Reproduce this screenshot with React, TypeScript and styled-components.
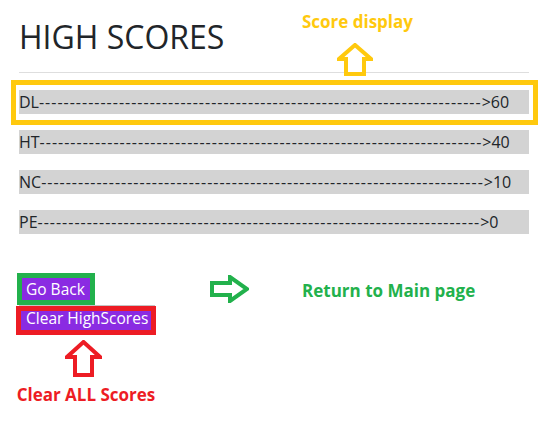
import React from 'react';
import styled, { createGlobalStyle } from 'styled-components';

const GlobalStyle = createGlobalStyle`
    body {
        margin: 0;
        background: #ffffff;
        font-family: 'Open Sans', 'Noto Sans', sans-serif;
        color: #212529;
    }
`;

const Page = styled.div`
    width: 550px;
    height: 434px;
    padding: 18px 21px 0 19px;
    box-sizing: border-box;
    overflow: hidden;
`;

const Header = styled.header`
    display: flex;
    align-items: flex-start;
    height: 54px;
`;

const Title = styled.h1`
    flex: 1;
    margin: 0;
    font-size: 32px;
    font-weight: 500;
    line-height: 1.2;
`;

const Callout = styled.div<{ $gap: number }>`
    display: flex;
    flex-direction: column;
    align-items: center;
    gap: ${({ $gap }) => $gap}px;
`;

const HeaderCallout = styled(Callout)`
    margin: -6px 116px 0 0;
`;

const Divider = styled.hr`
    margin: 0 0 17px 0;
    border: 0;
    border-top: 1px solid #dedede;
`;

const ScoreList = styled.ul`
    list-style: none;
    margin: 0;
    padding: 0;
    display: flex;
    flex-direction: column;
    gap: 16px;
`;

const ScoreRow = styled.li<{ $marked?: boolean }>`
    position: relative;
    height: 24px;
    line-height: 24px;
    font-size: 16px;
    background: #d3d3d3;
    white-space: nowrap;

    ${({ $marked }) =>
        $marked &&
        `
        &::after {
            content: '';
            position: absolute;
            left: -8px;
            top: -10px;
            right: -9px;
            bottom: -11px;
            border: 5px solid #ffc90e;
        }
    `}
`;

const Dashes = styled.span`
    letter-spacing: 1px;
`;

const Actions = styled.div`
    margin-top: 41px;
    display: grid;
    grid-template-columns: 191px 92px auto;
    row-gap: 2px;
    align-items: center;
`;

const ClearColumn = styled.div`
    grid-column: 1;
    display: flex;
    flex-direction: column;
    align-items: flex-start;
`;

const Button = styled.button<{ $frame: string; $inset: string }>`
    position: relative;
    height: 27px;
    padding: 0 6px;
    border: 1px solid #c4c4c4;
    background: #8a2be2;
    color: #ffffff;
    font-family: 'Open Sans', 'Noto Sans', sans-serif;
    font-size: 15.5px;
    line-height: 25px;
    cursor: pointer;
    justify-self: start;

    &::after {
        content: '';
        position: absolute;
        inset: ${({ $inset }) => $inset};
        border: 5px solid ${({ $frame }) => $frame};
    }
`;

const Note = styled.div<{ $color: string }>`
    color: ${({ $color }) => $color};
    font-size: 17px;
    font-weight: 700;
    line-height: 20px;
    white-space: nowrap;
`;

const ReturnNote = styled(Note)`
    margin-top: 4px;
`;

const ClearCallout = styled(Callout)`
    margin: 8px 0 0 -3px;
    width: 140px;
`;

const ArrowSvg = styled.svg<{ $shift?: number }>`
    display: block;
    margin-left: ${({ $shift }) => $shift ?? 0}px;
`;

const scores = [
    { name: 'DL', score: 60 },
    { name: 'HT', score: 40 },
    { name: 'NC', score: 10 },
    { name: 'PE', score: 0 },
];

function UpArrow({ w, h, color, shift }: { w: number; h: number; color: string; shift?: number }) {
    const mid = w / 2;
    const head = Math.round(h * 0.47);
    const shaft = Math.round(w * 0.26);
    return (
        <ArrowSvg $shift={shift} width={w} height={h} viewBox={`0 0 ${w} ${h}`}>
            <polygon
                points={`${mid},2 ${w - 2},${head} ${w - shaft},${head} ${w - shaft},${h - 2} ${shaft},${h - 2} ${shaft},${head} 2,${head}`}
                fill="none"
                stroke={color}
                strokeWidth={4}
            />
        </ArrowSvg>
    );
}

function RightArrow({ w, h, color }: { w: number; h: number; color: string }) {
    const mid = h / 2;
    const head = 20;
    return (
        <ArrowSvg width={w} height={h} viewBox={`0 0 ${w} ${h}`}>
            <polygon
                points={`2,8 ${head},8 ${head},2 ${w - 2},${mid} ${head},${h - 2} ${head},${h - 8} 2,${h - 8}`}
                fill="none"
                stroke={color}
                strokeWidth={4}
            />
        </ArrowSvg>
    );
}

export default function App() {
    return (
        <Page>
            <GlobalStyle />
            <Header>
                <Title>HIGH SCORES</Title>
                <HeaderCallout $gap={11}>
                    <Note $color="#ffc90e">Score display</Note>
                    <UpArrow w={36} h={33} color="#ffc90e" shift={-4} />
                </HeaderCallout>
            </Header>
            <Divider />
            <ScoreList>
                {scores.map((s, i) => (
                    <ScoreRow key={s.name} $marked={i === 0}>
                        {s.name}
                        <Dashes>{'-'.repeat(72)}</Dashes>
                        {'>'}
                        {s.score}
                    </ScoreRow>
                ))}
            </ScoreList>
            <Actions>
                <Button $frame="#22b14c" $inset="-4px -4px -3px -3px">
                    Go Back
                </Button>
                <RightArrow w={39} h={28} color="#22b14c" />
                <ReturnNote $color="#22b14c">Return to Main page</ReturnNote>
                <ClearColumn>
                    <Button $frame="#ed1c24" $inset="0 -2px -4px -4px">
                        Clear HighScores
                    </Button>
                    <ClearCallout $gap={8}>
                        <UpArrow w={37} h={37} color="#ed1c24" shift={-6} />
                        <Note $color="#ed1c24">Clear ALL Scores</Note>
                    </ClearCallout>
                </ClearColumn>
            </Actions>
        </Page>
    );
}
